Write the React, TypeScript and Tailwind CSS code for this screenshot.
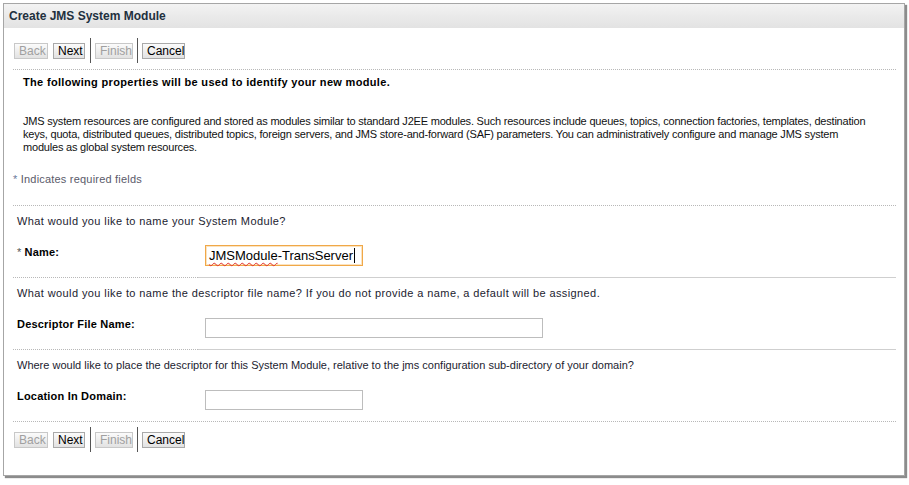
import React from 'react';

const font = { fontFamily: '"Liberation Sans", Tahoma, Arial, sans-serif' };

function WizardButtons() {
  const btn =
    'h-[16px] px-[4px] border border-[#a9a9a9] bg-gradient-to-b from-[#fbfbfb] to-[#e2e2e2] text-[12px] leading-[14px]';
  return (
    <div className="flex items-center h-[25px]">
      <button className={`${btn} ml-[1px] w-[34px] text-[#a0a0a0] border-[#c8c8c8]`}>Back</button>
      <button className={`${btn} ml-[5px] w-[32px] text-black`}>Next</button>
      <div className="ml-[5px] w-[1px] h-[25px] bg-[#555]" />
      <button className={`${btn} ml-[4px] w-[38px] text-[#a0a0a0] border-[#c8c8c8]`}>Finish</button>
      <div className="ml-[4px] w-[1px] h-[25px] bg-[#555]" />
      <button className={`${btn} ml-[4px] w-[43px] text-black`}>Cancel</button>
    </div>
  );
}

function Separator({ split }: { split?: boolean }) {
  if (!split) return <div className="border-t border-dotted border-[#b8b8b8]" />;
  return (
    <div className="flex">
      <div className="w-[185px] border-t border-dotted border-[#b8b8b8]" />
      <div className="flex-1 border-t border-[#cfcfcf]" />
    </div>
  );
}

function FieldGroup({
  question,
  label,
  required,
  children,
  topSplit,
  qClass = '',
}: {
  question: string;
  label: string;
  required?: boolean;
  children: React.ReactNode;
  topSplit?: boolean;
  qClass?: string;
}) {
  return (
    <div>
      <Separator split={topSplit} />
      <div className={`pl-[4px] pt-[9px] text-[11px] leading-[13px] text-[#1c1c30] ${qClass}`}>{question}</div>
      <div className="flex items-start mt-[18px] h-[20px]">
        <div className="w-[185px] pl-[4px] text-[11px] leading-[13px] font-bold text-black tracking-[0.2px]">
          {required && <span className="font-normal text-[#555] mr-[3px]">*</span>}
          {label}
        </div>
        <div className="pl-[7px]">{children}</div>
      </div>
      <div className="h-[11px]" />
    </div>
  );
}

export default function App() {
  return (
    <div className="w-[909px] h-[485px] bg-white pt-[3px] pl-[3px]" style={font}>
      <div className="w-[902px] h-[473px] border border-[#a6a6a6] bg-white shadow-[2px_2px_1px_rgba(0,0,0,0.45)]">
        {/* title bar */}
        <div className="h-[24px] bg-gradient-to-b from-[#f3f3f3] via-[#eaeaea] to-[#e3e3e3] pl-[5px] flex items-center">
          <span className="text-[12px] font-bold text-[#22303e]">Create JMS System Module</span>
        </div>

        <div className="pl-[9px] pr-[8px]">
          <div className="mt-[10px]">
            <WizardButtons />
          </div>
          <div className="mt-[6px]">
            <Separator />
          </div>

          <div className="pl-[10px] pt-[6px] text-[11px] font-bold text-black leading-[13px] tracking-[0.33px]">
            The following properties will be used to identify your new module.
          </div>

          <p className="pl-[10px] pr-[20px] mt-[26px] text-[11px] leading-[13px] text-[#111] tracking-[-0.2px]">
            JMS system resources are configured and stored as modules similar to standard J2EE modules. Such
            resources include queues, topics, connection factories, templates, destination keys, quota, distributed
            queues, distributed topics, foreign servers, and JMS store-and-forward (SAF) parameters. You can
            administratively configure and manage JMS system modules as global system resources.
          </p>

          <div className="mt-[19px] text-[11px] leading-[13px] text-[#5a5a6a] tracking-[0.2px]">
            <span className="text-[#6a7a9a]">*</span> Indicates required fields
          </div>

          <div className="mt-[19px]">
            <FieldGroup
              qClass="tracking-[0.4px]"
              question="What would you like to name your System Module?"
              label="Name:"
              required
            >
              <div className="w-[158px] h-[21px] -mt-[1px] border border-[#f0a848] shadow-[inset_0_0_0_1px_#fbe3c0] flex items-center pl-[3px] text-[13px] text-black">
                <span className="underline decoration-wavy decoration-[#e03030] decoration-1 underline-offset-2">
                  JMSModule
                </span>
                <span>-TransServer</span>
                <span className="ml-[1px] w-[1px] h-[15px] bg-black" />
              </div>
            </FieldGroup>
            <FieldGroup
              topSplit
              qClass="tracking-[0.4px]"
              question="What would you like to name the descriptor file name? If you do not provide a name, a default will be assigned."
              label="Descriptor File Name:"
            >
              <div className="w-[338px] h-[20px] border border-[#bdbdbd]" />
            </FieldGroup>
            <FieldGroup
              topSplit
              question="Where would like to place the descriptor for this System Module, relative to the jms configuration sub-directory of your domain?"
              label="Location In Domain:"
            >
              <div className="w-[158px] h-[20px] border border-[#bdbdbd]" />
            </FieldGroup>
          </div>
          <Separator />
          <div className="mt-[5px]">
            <WizardButtons />
          </div>
        </div>
      </div>
    </div>
  );
}
